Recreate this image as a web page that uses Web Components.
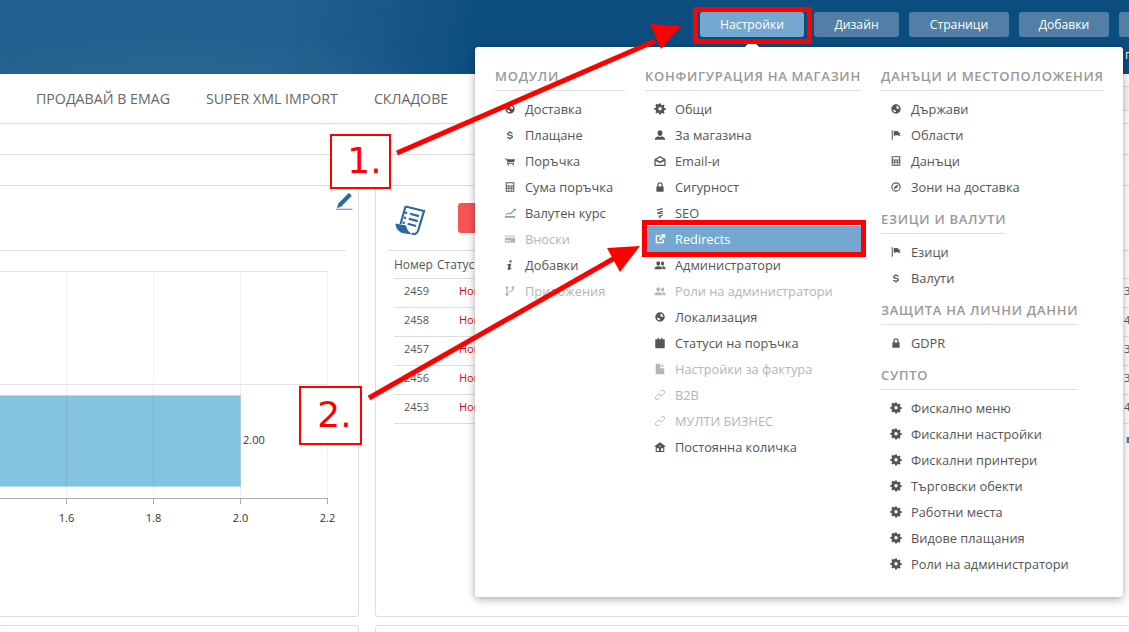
<!DOCTYPE html>
<html>
<head>
<meta charset="utf-8">
<style>
  html, body { margin: 0; height: 632px; overflow: hidden; background: #fff; }
  body { font-family: "Open Sans", sans-serif; color: #555; }
</style>
</head>
<body>
<admin-page></admin-page>

<script>
// Icon shapes, 14x14 box. Small font-icon lookalikes.
const ICONS = {
  globe: '<path fill-rule="evenodd" d="M7 1.500a5.500 5.500 0 1 0 0 11 5.500 5.500 0 0 0 0-11zM7.600 3.300c1.700.2 3 1.500 3.200 3.300H7.600zM3.300 7.800l2.400.3 1.500 1.500-.5 1.300c-1.600-.2-3-1.500-3.400-3.100z"/>',
  dollar: '<path d="M3.500 9.200h1.600c.1.500.8.800 1.900.800s1.800-.3 1.800-.9-.6-.8-2-1.100c-2-.4-3.100-.9-3.100-2.300 0-1.200.9-2 2.500-2.200V2.500h1.500v1c1.500.2 2.500 1 2.600 2.100H8.700c-.1-.5-.8-.8-1.700-.8-1 0-1.600.3-1.600.8s.6.7 1.900 1c2.100.4 3.200 1 3.200 2.400 0 1.300-1 2.100-2.700 2.300v1H6.300v-1C4.600 11.100 3.600 10.400 3.500 9.200z"/>',
  cart: '<path d="M1 4h2l.5 1H13l-1.300 3.500H5l-.3.7h7v.9H3.400l.7-1.900L2.400 4.900H1z"/><circle cx="5" cy="11.500" r=".9"/><circle cx="10.800" cy="11.500" r=".9"/>',
  calc: '<path fill-rule="evenodd" d="M2 1.500h10v11H2zM3.200 2.700v2.500h7.600V2.700zM3.200 6.500v1.500h2v-1.500zM6 6.500v1.500h2v-1.500zM8.800 6.500v1.500h2v-1.500zM3.200 9v2.300h2V9zM6 9v2.300h2V9zM8.800 9v2.300h2V9z"/>',
  chart: '<path d="M1 11h12v1.200H1z"/><path d="M1.500 9.500l3.300-3 2 1.300L12 3.200l-.8-.8 2.300-.4-.3 2.400-.7-.7-5.300 5-2.200-1.400-2.700 2.400z"/>',
  card: '<path fill-rule="evenodd" d="M1 3h12v8.500H1zM1 4.200v1.200h12V4.200zM2.200 8.500v1.300h3V8.500zM6 8.500v1.300h1.500V8.500z"/>',
  info: '<path d="M7.500 1.500c.9 0 1.500.5 1.500 1.200S8.300 4 7.500 4 6.200 3.500 6.200 2.800s.5-1.300 1.300-1.300zM3.800 6.200 8.600 5.300 7.200 10.500c-.1.400.3.500 1.800-.4l.3.500c-1.500 1.500-2.800 2.100-3.800 2.100S4.100 12 4.400 11L5.400 7.300l-1.500.2z"/>',
  branch: '<path fill-rule="evenodd" d="M3.500 1.500a1.700 1.700 0 0 1 .7 3.200v4.600a1.700 1.700 0 1 1-1.400 0V4.700a1.700 1.700 0 0 1 .7-3.200zM10.500 1.500a1.700 1.700 0 0 1 .7 3.200c0 2.800-2.500 3.300-5.700 4.300V7.600c2.600-.8 4.300-1.100 4.300-2.900a1.700 1.700 0 0 1 .7-3.200z"/>',
  gear: '<path fill-rule="evenodd" d="M6 1h2l.4 1.700 1.100.5L11 2.300l1.400 1.400-.9 1.500.5 1.100 1.700.4v2l-1.700.4-.5 1.100.9 1.500-1.400 1.400-1.500-.9-1.100.5L8 14H6l-.4-1.700-1.100-.5-1.500.9-1.400-1.400.9-1.500-.5-1.100L.3 8.300v-2l1.700-.4.5-1.100-.9-1.500L3 1.400l1.500.9 1.100-.5zM7 5.300a2 2 0 1 0 0 4 2 2 0 0 0 0-4z" transform="translate(0 -.5)"/>',
  user: '<path d="M7 1.500c1.700 0 2.900 1.300 2.900 3.200S8.700 8.300 7 8.300 4.100 6.600 4.100 4.700 5.300 1.500 7 1.500zM1 12.500c0-2.500 2-3.500 4-4 .5.500 1.200.800 2 .800s1.500-.3 2-.8c2 .5 4 1.500 4 4z"/>',
  mail: '<path fill-rule="evenodd" d="M7 1.200 13.500 5v7.800H.5V5zM7 3 3 5.300 7 7.600l4-2.300zM2 7v4.300h10V7L7 9.600z"/>',
  lock: '<path fill-rule="evenodd" d="M7 1.500c1.900 0 3.100 1.300 3.100 3.200v1.600h1.100v6.200H2.800V6.300h1.100V4.700C3.900 2.800 5.100 1.500 7 1.500zM7 3C6 3 5.400 3.700 5.400 4.700v1.600h3.200V4.700C8.600 3.700 8 3 7 3z"/>',
  seo: '<path d="M3.500 3 10 1.200v1.300L3.500 4.500zM3.500 6.700 10.500 4.200v1.300L6 7.200l4.500.2v1.200L3.500 8zM4 10.500l6-1.600v1.200l-2.800.9 1.300.6L7 13.500 6 12.300l.8-.6z"/>',
  link: '<path fill-rule="evenodd" d="M2 2.500h6v1.600H3.600v6.300h6.300V7.500h1.600v4.500H2z"/><path d="M8 1.500h5v5l-1.800-1.800-3.700 3.800-1.500-1.500 3.800-3.700z"/>',
  users: '<path d="M5 2.500c1.300 0 2.200 1 2.200 2.500S6.300 8 5 8 2.800 6.500 2.800 5 3.700 2.500 5 2.500zM.5 12c0-2 1.500-3 3.200-3.400.4.300.8.500 1.300.5s.9-.2 1.300-.5C8 9 9.500 10 9.500 12zM10 3c1 0 1.800.9 1.800 2.200S11 7.700 10 7.700 8.200 6.400 8.200 5.200 9 3 10 3zM10.200 12c0-1.500-.7-2.500-1.800-3.200.3-.1.500-.2.700-.3.300.3.600.4.900.4s.7-.2 1-.4c1.200.4 2.500 1.200 2.500 3.500z"/>',
  clip: '<path fill-rule="evenodd" d="M1.500 2.500h2.800V1h1.400v1.500h2.600V1h1.400v1.500h2.800V13h-11z"/>',
  doc: '<path d="M2 1h5.500v5H12V13H2z"/><path d="M8.800 1 12 4.500H8.800z"/>',
  chain: '<path fill="none" stroke="currentColor" stroke-width="1.100" d="M7.500 3.500l1.300-1.300a2 2 0 0 1 3 3L9.500 7.500a2 2 0 0 1-3 0M6.500 10.500l-1.300 1.300a2 2 0 0 1-3-3L4.500 6.500a2 2 0 0 1 3 0"/>',
  home: '<path fill-rule="evenodd" d="M7 1.500l6.500 4.600-.7 1L12 6.500V12.800H2V6.500l-.8.600-.7-1zM3.200 8.500v3.100h2.600V8.500zM8.200 8.500v3.100h2.600V8.500zM6.100 5.500v1h1.800v-1z"/>',
  flag: '<path d="M2 1.500h1.200v11H2zM4.400 2l2.700.7L9.500 2v2.200l3 .1-1.500 1.800 1.500 1.800c-2 .2-3.400-.5-4.500-.7l-3.600.7z"/>',
  target: '<path fill-rule="evenodd" d="M7 1.500a5.500 5.500 0 1 0 0 11 5.500 5.500 0 0 0 0-11zM7 2.800a4.200 4.200 0 1 1 0 8.400 4.200 4.200 0 0 1 0-8.400zM10 4 5.800 6 4 10l4.200-2z"/>',
}

function icon(name, size = 14) {
  return `<svg width="${size}" height="${size}" viewBox="0 0 14 14" fill="currentColor" aria-hidden="true">${ICONS[name] || ''}</svg>`
}

// Blue pill in the header
class TopButton extends HTMLElement {
  constructor() {
    super()
    this.attachShadow({ mode: 'open' }).innerHTML = `
      <style>
        :host {
          display: flex; align-items: center; justify-content: center;
          height: 25px; box-sizing: border-box; border-radius: 3px;
          background: #517fa5; color: #fff; font-size: 12.2px; flex: none;
        }
        :host([active]) { background: #74a8d0; }
      </style>
      <slot></slot>`
  }
}
customElements.define('top-button', TopButton)

class TopHeader extends HTMLElement {
  constructor() {
    super()
    this.attachShadow({ mode: 'open' }).innerHTML = `
      <style>
        :host {
          display: flex; height: 74px; box-sizing: border-box; padding: 12px 0 0 700px; gap: 10px;
          background:
            radial-gradient(ellipse 300px 60px at 170px 85px, rgba(255,255,255,.05), rgba(255,255,255,0)),
            linear-gradient(100deg, #205f8e 0%, #215f8f 25%, #1b5a89 32%, #0c4d80 43%, #0c4d80 100%);
          overflow: hidden; position: relative;
        }
        .cut { position: absolute; left: 1125px; top: 47px; color: #fff; font-size: 12px; line-height: 16px; }
      </style>
      <top-button active style="width:104px">Настройки</top-button>
      <top-button style="width:85px">Дизайн</top-button>
      <top-button style="width:100px">Страници</top-button>
      <top-button style="width:90px">Добавки</top-button>
      <top-button style="width:60px"></top-button>
      <div class="cut">г</div>`
  }
}
customElements.define('top-header', TopHeader)

class MainNav extends HTMLElement {
  constructor() {
    super()
    this.attachShadow({ mode: 'open' }).innerHTML = `
      <style>
        :host {
          display: flex; height: 50px; box-sizing: border-box; padding: 0 0 0 36px; gap: 36px;
          align-items: center; border-bottom: 1px solid #ddd;
          font-size: 14.2px; color: #666; white-space: nowrap;
        }
        .search {
          margin-left: auto; width: 10px; height: 25px; box-sizing: border-box;
          border: solid #ddd; border-width: 1px 0; background: #f7f7f7;
        }
      </style>
      <span>ПРОДАВАЙ В EMAG</span><span>SUPER XML IMPORT</span><span>СКЛАДОВЕ</span>
      <div class="search"></div>`
  }
}
customElements.define('main-nav', MainNav)

// Horizontal bar chart, only the right part is on screen
class BarChart extends HTMLElement {
  constructor() {
    super()
    const xs = [[66, '1.6'], [153, '1.8'], [240, '2.0'], [327, '2.2']]
    this.attachShadow({ mode: 'open' }).innerHTML = `
      <style>
        :host { display: block; height: 360px; }
        svg { display: block; }
        text { font-family: "Open Sans", sans-serif; font-size: 11px; fill: #333; }
      </style>
      <svg width="340" height="360" viewBox="0 0 340 360">
        <path d="M0 20.500H327.500M0 133.500H327.500" stroke="#e4e4e4"/>
        <rect x="-1" y="144.500" width="241.500" height="91" fill="#85c3e3" stroke="#b4d9ed"/>
        ${xs.map(([x]) => `<path d="M${x + .5} 20V247" stroke="#333" stroke-opacity=".08"/><path d="M${x + .5} 247V253" stroke="#aaa"/>`).join('')}
        <path d="M0 247.500H327.500" stroke="#aaa"/>
        ${xs.map(([x, t]) => `<text x="${x + .5}" y="271" text-anchor="middle">${t}</text>`).join('')}
        <text x="243" y="193">2.00</text>
      </svg>`
  }
}
customElements.define('bar-chart', BarChart)

class ChartCard extends HTMLElement {
  constructor() {
    super()
    this.attachShadow({ mode: 'open' }).innerHTML = `
      <style>
        :host {
          display: block; box-sizing: border-box; height: 432px; width: 360px; margin-left: -1px; flex: none;
          border: 1px solid #ddd; border-radius: 0 3px 3px 0; position: relative;
        }
        .head { height: 65px; margin-right: 12px; border-bottom: 1px solid #ddd; display: flex; justify-content: flex-end; padding-top: 7px; box-sizing: border-box; color: #2a6a9e; }
        .head svg { margin-right: -7px; }
      </style>
      <div class="head">
        <svg width="18" height="18" viewBox="0 0 18 18" fill="currentColor"><path d="M13.200 .6c.5-.5 1.200-.4 1.700.1l1.200 1.200c.5.500.6 1.200.1 1.700L6.400 13.500 2 15.200l1.300-4.600z"/><path d="M1 15.800h16.500v.8H1z"/></svg>
      </div>
      <bar-chart></bar-chart>`
  }
}
customElements.define('chart-card', ChartCard)

class OrdersCard extends HTMLElement {
  constructor() {
    super()
    const rows = ['2459', '2458', '2457', '2456', '2453']
    const tails = ['3', '4', '3', '3', '4']
    this.attachShadow({ mode: 'open' }).innerHTML = `
      <style>
        :host {
          display: block; box-sizing: border-box; height: 432px; width: 760px; flex: none;
          border: 1px solid #ddd; border-radius: 3px; position: relative; font-size: 12px; color: #555;
        }
        .head { height: 65px; margin: 0 0 0 12px; border-bottom: 1px solid #ddd; display: flex; gap: 32px; padding-top: 17px; box-sizing: border-box; }
        .btn { width: 60px; height: 30px; background: #f95454; border-radius: 3px; }
        .scroll { color: #2a6a9e; margin: 1px 0 0 6px; }
        .cols { display: flex; height: 27px; align-items: center; padding-left: 18px; gap: 4px; }
        .row { display: flex; height: 29px; box-sizing: border-box; margin-left: 18px; border-top: 1px solid #ddd; align-items: center; padding-bottom: 5px; position: relative; }
        .row:last-of-type { border-bottom: 1px solid #ddd; height: 30px; }
        .num { width: 65px; padding-left: 10px; box-sizing: border-box; font-size: 11px; }
        .st { color: #e30613; font-size: 11px; }
        .tail { position: absolute; left: 730px; font-size: 11px; }
        .more { position: absolute; left: 750px; top: 245px; font-size: 11px; color: #2a6a9e; font-weight: 700; }
      </style>
      <div class="head">
        <svg class="scroll" width="32" height="32" viewBox="0 0 32 32">
          <path fill="none" stroke="currentColor" stroke-width="2.200" d="M11.500 2.500 30 7l-6 20c-1 3-4 3.500-6 2.500M11.500 2.500 6.500 20"/>
          <path fill="currentColor" d="M1.500 19.500 12 21.500c.5 3.500 3 6.500 6 9L8 29C4 27 1.500 24 1.500 19.500z"/>
          <path fill="none" stroke="currentColor" stroke-width="2.200" d="M11 8.500l2.200.6M9.800 13.500l2.200.6M8.600 18.500l2.200.6M16 9.800l9 2.300M14.800 14.800l9 2.300M13.600 19.800l8.500 2.200"/>
        </svg>
        <div class="btn"></div>
      </div>
      <div class="cols"><span>Номер</span><span>Статус</span></div>
      ${rows.map((n, i) => `<div class="row"><span class="num">${n}</span><span class="st">Нова</span><span class="tail">${tails[i]}</span></div>`).join('')}
      <span class="more">в</span>`
  }
}
customElements.define('orders-card', OrdersCard)

// One menu column section: title with underline, then items
class MenuSection extends HTMLElement {
  constructor() {
    super()
    this.attachShadow({ mode: 'open' }).innerHTML = `
      <style>
        :host { display: block; }
        h4 {
          margin: 0 0 5px; height: 26px; line-height: 22px; box-sizing: border-box; width: var(--line, 100%);
          border-bottom: 1px solid #ddd; font-size: 13px; font-weight: 600; letter-spacing: .72px;
          color: #999; white-space: nowrap;
        }
      </style>
      <h4></h4>
      <slot></slot>`
    this.shadowRoot.querySelector('h4').textContent = this.getAttribute('title')
    this.removeAttribute('title')
  }
}
customElements.define('menu-section', MenuSection)

class MenuItem extends HTMLElement {
  constructor() {
    super()
    this.attachShadow({ mode: 'open' }).innerHTML = `
      <style>
        :host {
          display: flex; align-items: center; height: 26px; box-sizing: border-box;
          padding-left: 8px; gap: 9px; font-size: 12.8px; color: #555; white-space: nowrap;
        }
        :host([off]) { color: #b5b5b5; }
        :host([sel]) { background: #74a8d0; color: #fff; }
        .i { width: 13px; height: 12px; flex: none; display: flex; justify-content: center; }
      </style>
      <span class="i">${icon(this.getAttribute('icon'), 12)}</span>
      <slot></slot>`
  }
}
customElements.define('menu-item', MenuItem)

class SettingsMenu extends HTMLElement {
  constructor() {
    super()
    this.attachShadow({ mode: 'open' }).innerHTML = `
      <style>
        :host {
          position: absolute; left: 475px; top: 47px; width: 648px; height: 550px; box-sizing: border-box;
          background: #fff; border-radius: 3px; box-shadow: 0 2px 8px rgba(0,0,0,.35);
          padding: 18px 20px 0; display: grid; grid-template-columns: 130px 216px 222px; column-gap: 20px;
          z-index: 2;
        }
        :host::before {
          content: ""; position: absolute; left: 272px; top: -5px; width: 10px; height: 10px;
          background: #fff; transform: rotate(45deg);
        }
        .col { display: flex; flex-direction: column; gap: 8px; }
      </style>
      <div class="col">
        <menu-section title="МОДУЛИ">
          <menu-item icon="globe">Доставка</menu-item>
          <menu-item icon="dollar">Плащане</menu-item>
          <menu-item icon="cart">Поръчка</menu-item>
          <menu-item icon="calc">Сума поръчка</menu-item>
          <menu-item icon="chart">Валутен курс</menu-item>
          <menu-item icon="card" off>Вноски</menu-item>
          <menu-item icon="info">Добавки</menu-item>
          <menu-item icon="branch" off>Приложения</menu-item>
        </menu-section>
      </div>
      <div class="col">
        <menu-section title="КОНФИГУРАЦИЯ НА МАГАЗИН">
          <menu-item icon="gear">Общи</menu-item>
          <menu-item icon="user">За магазина</menu-item>
          <menu-item icon="mail">Email-и</menu-item>
          <menu-item icon="lock">Сигурност</menu-item>
          <menu-item icon="seo">SEO</menu-item>
          <menu-item icon="link" sel>Redirects</menu-item>
          <menu-item icon="users">Администратори</menu-item>
          <menu-item icon="users" off>Роли на администратори</menu-item>
          <menu-item icon="globe">Локализация</menu-item>
          <menu-item icon="clip">Статуси на поръчка</menu-item>
          <menu-item icon="doc" off>Настройки за фактура</menu-item>
          <menu-item icon="chain" off>B2B</menu-item>
          <menu-item icon="chain" off>МУЛТИ БИЗНЕС</menu-item>
          <menu-item icon="home">Постоянна количка</menu-item>
        </menu-section>
      </div>
      <div class="col r">
        <menu-section title="ДАНЪЦИ И МЕСТОПОЛОЖЕНИЯ">
          <menu-item icon="globe">Държави</menu-item>
          <menu-item icon="flag">Области</menu-item>
          <menu-item icon="calc">Данъци</menu-item>
          <menu-item icon="target">Зони на доставка</menu-item>
        </menu-section>
        <menu-section title="ЕЗИЦИ И ВАЛУТИ" style="--line:124px">
          <menu-item icon="flag">Езици</menu-item>
          <menu-item icon="dollar">Валути</menu-item>
        </menu-section>
        <menu-section title="ЗАЩИТА НА ЛИЧНИ ДАННИ" style="--line:196px">
          <menu-item icon="lock">GDPR</menu-item>
        </menu-section>
        <menu-section title="СУПТО" style="--line:197px">
          <menu-item icon="gear">Фискално меню</menu-item>
          <menu-item icon="gear">Фискални настройки</menu-item>
          <menu-item icon="gear">Фискални принтери</menu-item>
          <menu-item icon="gear">Търговски обекти</menu-item>
          <menu-item icon="gear">Работни места</menu-item>
          <menu-item icon="gear">Видове плащания</menu-item>
          <menu-item icon="gear">Роли на администратори</menu-item>
        </menu-section>
      </div>`
  }
}
customElements.define('settings-menu', SettingsMenu)

// Red tutorial marks drawn on top of the screenshot
class RedMarks extends HTMLElement {
  constructor() {
    super()
    this.attachShadow({ mode: 'open' }).innerHTML = `
      <style>
        :host { position: absolute; inset: 0; z-index: 5; pointer-events: none; }
        svg { position: absolute; inset: 0; }
        .box { position: absolute; box-sizing: border-box; border: 5px solid #f00; }
        .lbl {
          position: absolute; box-sizing: border-box; border: 2px solid #f00; background: #fff; color: #f00;
          font: 36px "DejaVu Sans", sans-serif; display: flex; align-items: center; justify-content: center;
          padding: 0 0 2px 8px;
        }
      </style>
      <svg width="1129" height="632" viewBox="0 0 1129 632" fill="#f00" stroke="none">
        <path d="M397 153 L655 41" stroke="#f00" stroke-width="5"/>
        <path d="M681 26 L650 24 L661 49z"/>
        <path d="M369 398 L620 255" stroke="#f00" stroke-width="5"/>
        <path d="M640 246 L607 248 L620 272z"/>
      </svg>
      <div class="box" style="left:693px;top:7px;width:119px;height:37px"></div>
      <div class="box" style="left:642px;top:220px;width:224px;height:37px"></div>
      <div class="lbl" style="left:330px;top:134px;width:61px;height:55px">1.</div>
      <div class="lbl" style="left:299px;top:386px;width:63px;height:59px">2.</div>`
  }
}
customElements.define('red-marks', RedMarks)

class AdminPage extends HTMLElement {
  constructor() {
    super()
    this.attachShadow({ mode: 'open' }).innerHTML = `
      <style>
        :host { display: block; position: relative; width: 1129px; height: 632px; overflow: hidden; }
        .strip { height: 31px; box-sizing: border-box; border-bottom: 1px solid #ddd; }
        .cards { display: flex; gap: 16px; margin-top: -1px; }
        .bottom { display: flex; gap: 16px; margin-top: 8px; }
        .bottom div { height: 20px; border: 1px solid #ddd; border-radius: 3px; box-sizing: border-box; flex: none; }
      </style>
      <top-header></top-header>
      <main-nav></main-nav>
      <div class="strip"></div>
      <div class="strip"></div>
      <div class="cards"><chart-card></chart-card><orders-card></orders-card></div>
      <div class="bottom"><div style="width:360px;margin-left:-1px"></div><div style="width:760px"></div></div>
      <settings-menu></settings-menu>
      <red-marks></red-marks>`
  }
}
customElements.define('admin-page', AdminPage)
</script>
</body>
</html>
